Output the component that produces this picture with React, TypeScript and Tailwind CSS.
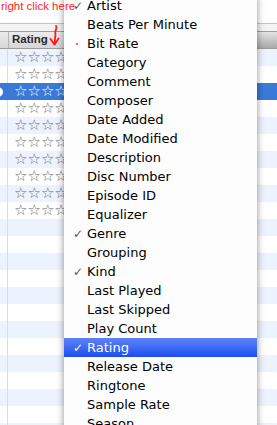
import React from "react";

type Item = { t: string; c?: boolean; sel?: boolean };

const items: Item[] = [
  { t: "Artist", c: true },
  { t: "Beats Per Minute" },
  { t: "Bit Rate" },
  { t: "Category" },
  { t: "Comment" },
  { t: "Composer" },
  { t: "Date Added" },
  { t: "Date Modified" },
  { t: "Description" },
  { t: "Disc Number" },
  { t: "Episode ID" },
  { t: "Equalizer" },
  { t: "Genre", c: true },
  { t: "Grouping" },
  { t: "Kind", c: true },
  { t: "Last Played" },
  { t: "Last Skipped" },
  { t: "Play Count" },
  { t: "Rating", c: true, sel: true },
  { t: "Release Date" },
  { t: "Ringtone" },
  { t: "Sample Rate" },
  { t: "Season" },
];

const rows = Array.from({ length: 23 }, (_, i) => i);

export default function App() {
  return (
    <div className="relative w-[277px] h-[425px] overflow-hidden bg-white">
      {/* table */}
      <div className="flex flex-col">
        <div className="h-[23px] bg-white" />
        <div className="h-[8px] bg-[#f3f3f3] border-t border-[#c4c4c4]" />
        <div className="h-[18px] flex border-t border-b border-[#9c9c9c] bg-gradient-to-b from-[#ececec] to-[#d6d6d6]">
          <div className="w-[9px] border-r border-[#b4b4b4]" />
          <div
            className="w-[231px] flex items-center pl-[3px] text-[11.5px] font-bold text-[#2a2a2a] leading-none"
            style={{ fontFamily: '"Liberation Sans", Arial, sans-serif' }}
          >
            Rating
          </div>
          <div className="flex-1 border-l border-[#b4b4b4] bg-gradient-to-b from-[#e4e4e4] to-[#a9a9a9]" />
        </div>
        {rows.map((i) => {
          const sel = i === 2;
          const striped = i % 2 === 0;
          const bg = sel ? "bg-[#3a79d7]" : striped ? "bg-[#edf3fe]" : "bg-white";
          return (
            <div key={i} className={`h-[17px] flex ${bg}`}>
              <div className={`w-[8px] flex items-center ${sel ? "" : "border-r border-[#dcdcdc]"}`}>
                {sel && <div className="w-[10px] h-[10px] rounded-full bg-white ml-[-7px]" />}
              </div>
              {i < 10 && (
                <div
                  className={`pl-[6px] flex items-center text-[15px] tracking-[0px] leading-none ${sel ? "text-white" : "text-[#6e6e6e]"}`}
                  style={{ fontFamily: '"DejaVu Sans", sans-serif' }}
                >
                  ☆☆☆☆☆
                </div>
              )}
            </div>
          );
        })}
      </div>

      {/* context menu */}
      <div className="absolute left-[64px] top-[-4px] w-[193px] bg-[#fdfdfd] shadow-[0_0_7px_rgba(0,0,0,0.45)]">
        {items.map((it) => (
          <div
            key={it.t}
            className={`h-[19px] flex items-center ${it.sel ? "bg-gradient-to-b from-[#5f82f6] to-[#1c4cf0] text-white" : "text-black"}`}
            style={{ fontFamily: '"DejaVu Sans", sans-serif' }}
          >
            <div
              className={`w-[23px] pl-[9px] text-[12px] font-bold leading-none ${it.sel ? "text-white" : "text-[#555555]"}`}
            >
              {it.c ? "✓" : ""}
            </div>
            <div className="text-[13px] leading-none">{it.t}</div>
          </div>
        ))}
      </div>

      {/* annotations */}
      <div
        className="absolute left-[1px] top-[0px] text-[11.5px] leading-[13px] text-[#ff1f1f]"
        style={{ fontFamily: '"Liberation Sans", Arial, sans-serif' }}
      >
        right click here
      </div>
      <div className="absolute left-[76px] top-[43px] w-[2px] h-[2px] rounded-full bg-[#ff2020]" />
      <svg className="absolute left-[46px] top-[25px]" width="16" height="22" viewBox="0 0 16 22">
        <path d="M10 1 C12 3 8 6 9.5 9 L8.5 19" stroke="#ff1a1a" strokeWidth="1.8" fill="none" strokeLinecap="round" />
        <path d="M4.5 14 L8.5 19.5 L12.5 13.5" stroke="#ff1a1a" strokeWidth="1.8" fill="none" strokeLinecap="round" strokeLinejoin="round" />
      </svg>
    </div>
  );
}
